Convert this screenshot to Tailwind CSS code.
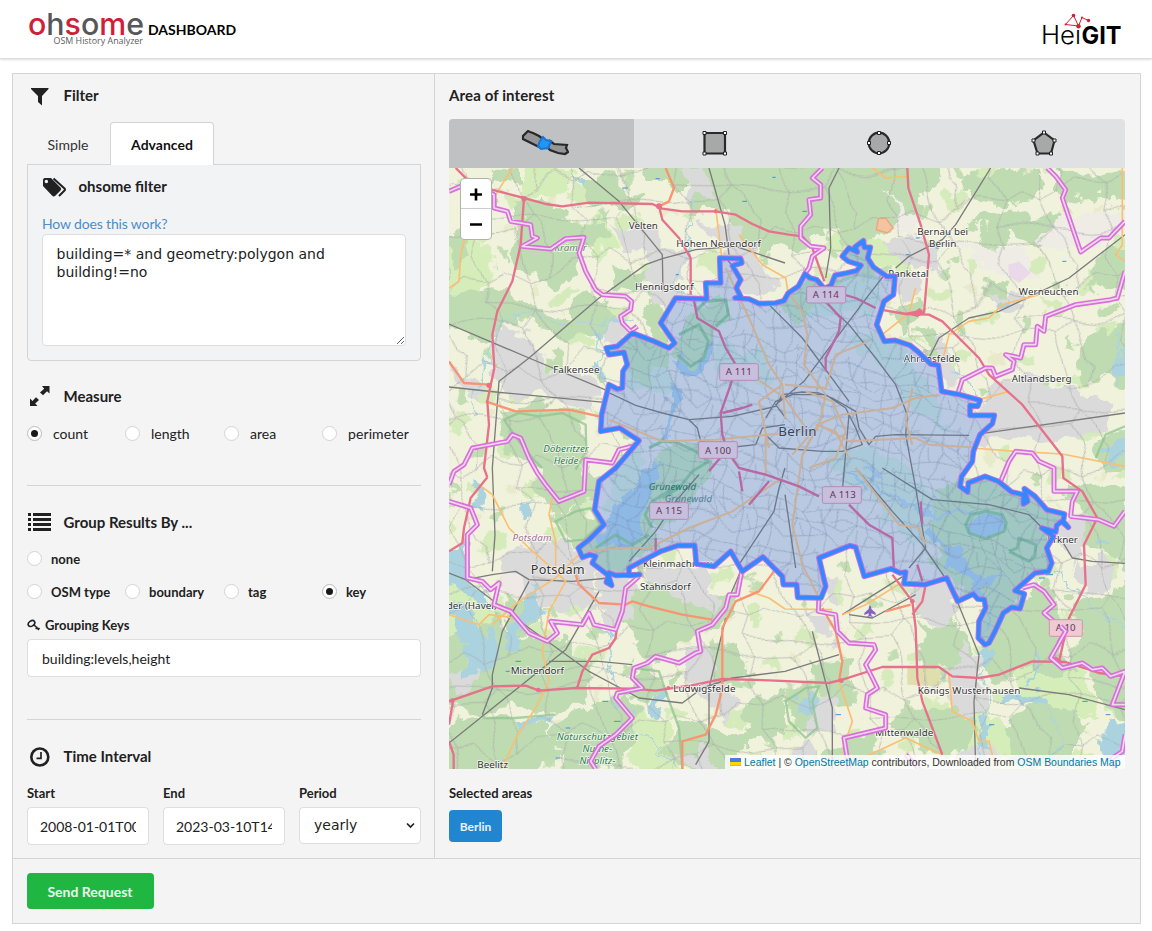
<!DOCTYPE html>
<html lang="en">
<head>
<meta charset="utf-8">
<title>ohsome dashboard</title>
<script src="https://cdn.jsdelivr.net/npm/@tailwindcss/browser@4"></script>
</head>
<body class="w-[1152px] h-[931px] overflow-hidden bg-white font-['Lato',sans-serif] text-sm text-[#212121]">
<header class="h-[59px] flex justify-between border-b border-[#dcdddd] shadow-[0_1px_2px_rgba(34,36,38,0.15)] pl-7 pr-[29px]">
  <div class="flex">
    <svg class="w-[117px] h-[58px]" viewBox="28 0 117 58" aria-label="ohsome OSM History Analyzer">
      <text x="28" y="35" font-family="Inter" font-size="30.500" font-weight="500" textLength="116" lengthAdjust="spacingAndGlyphs" fill="#555758"><tspan fill="#cf2037">o</tspan>h<tspan fill="#cf2037">s</tspan>o<tspan fill="#cf2037">m</tspan>e</text>
      <text x="53.500" y="43.500" font-size="9.500" font-family="Open Sans" font-weight="400" textLength="89.500" lengthAdjust="spacingAndGlyphs" fill="#5c5c5c">OSM History Analyzer</text>
    </svg>
    <span class="mt-5 ml-[3px] text-sm leading-5 font-bold text-black">DASHBOARD</span>
  </div>
  <svg class="w-[82px] h-[58px]" viewBox="1041 0 82 58" fill="#000" font-family="Inter">
    <text x="1041" y="44" font-size="25.500" font-weight="300" textLength="40" lengthAdjust="spacingAndGlyphs">Heı</text>
    <text x="1081.500" y="44" font-size="24.500" font-weight="700" textLength="40" lengthAdjust="spacingAndGlyphs">GIT</text>
    <path d="M1065.500 24.500 1073.500 15.500 1078.500 26 1065.500 24.500M1078.500 26 1082 17.500 1088.500 20.500" fill="none" stroke="#cf2037"/>
    <g fill="#cf2037"><circle cx="1073.500" cy="15.500" r="1.800"/><circle cx="1078.500" cy="26.300" r="2.200"/><circle cx="1088.500" cy="20.500" r="1.700"/><circle cx="1082" cy="17.500" r="1"/><circle cx="1065.500" cy="24.500" r="1"/></g>
  </svg>
</header>

<main class="mt-[14px] ml-3 w-[1129px] h-[851px] border border-[#d4d4d5] bg-[#f4f4f4]">
 <div class="flex h-[785px] border-b border-[#d4d4d5]">
  <section class="w-[422px] h-[784px] border-r border-[#d4d4d5] pl-[14px] pr-[13px]">
    <h2 class="flex items-center h-12 pb-1 text-[15px] font-bold"><svg class="w-[25px] h-6 mr-[11.500px]" viewBox="0 0 25 24"><path d="M4 4H21.500V5L15 12V21.500L11 18V12L4 5Z" fill="#212121"/></svg>Filter</h2>
    <div class="flex h-[43px] relative z-10 -mb-px">
      <span class="w-[83px] pr-px text-center leading-[46px] text-[#333]">Simple</span>
      <span class="w-[104px] rounded-t border border-b-0 border-[#d4d4d5] bg-white text-center leading-[44px] font-bold text-black/95">Advanced</span>
    </div>
    <div class="h-[197px] rounded-b border border-[#d4d4d5] bg-[#f2f3f5] px-[14px]">
      <h3 class="flex items-center h-[43px] text-[15px] font-bold"><svg class="w-[25px] h-6 mr-[11.500px]" viewBox="0 0 25 24"><path fill-rule="evenodd" d="M1 5Q1 3 3 3H9L18.500 12.500Q20 14 18.500 15.500L13 21Q11.500 22 10 20.500L1 11ZM4.300 4.700A1.700 1.700 0 1 0 4.400 8.200 1.700 1.700 0 0 0 4.300 4.700Z" fill="#212121"/><path d="M11.500 3.500 22.500 13.500Q23.500 14.500 22.500 15.500L17 21" fill="none" stroke="#212121" stroke-width="2"/></svg>ohsome filter</h3>
      <a class="block mt-[7px] h-[19px] leading-[18px] tracking-[-0.15px] text-[#4a8ecb]">How does this work?</a>
      <textarea class="block w-[364px] h-[112px] resize rounded border border-[#dededf] bg-white px-[13.500px] pt-[10px] font-['DejaVu_Sans',sans-serif] text-sm leading-[18px]">building=* and geometry:polygon and building!=no</textarea>
    </div>
    <h2 class="flex items-center mt-[23px] h-6 text-[15px] font-bold"><svg class="w-[25px] h-6 mr-[11.500px]" viewBox="0 0 25 24"><path d="M15 2H22.500V9.500L20 7.300 16 11.200 13 8.500 17.200 4.700ZM3 14.500 5.500 17 9 13.300 12 16 8.200 19.500 10.500 22H3Z" fill="#212121"/></svg><span class="pt-[2px]">Measure</span></h2>
    <div class="flex mt-[15px] h-5 items-center whitespace-nowrap">
      <label class="w-[98px] flex items-center gap-[11px]"><i class="size-[15px] shrink-0 rounded-full border border-[#bbb] bg-white flex items-center justify-center"><b class="size-[7px] rounded-full bg-black/90"></b></i><span class="pt-px">count</span></label>
      <label class="w-[99px] flex items-center gap-[11px]"><i class="size-[15px] shrink-0 rounded-full border border-[#d4d4d5] bg-white"></i><span class="pt-px">length</span></label>
      <label class="w-[98px] flex items-center gap-[11px]"><i class="size-[15px] shrink-0 rounded-full border border-[#d4d4d5] bg-white"></i><span class="pt-px">area</span></label>
      <label class="flex items-center gap-[11px]"><i class="size-[15px] shrink-0 rounded-full border border-[#d4d4d5] bg-white"></i><span class="pt-px tracking-[0.1px]">perimeter</span></label>
    </div>
    <hr class="mt-[42px] border-[#d4d4d5]">
    <h2 class="flex items-center mt-6 h-6 text-[15px] font-bold"><svg class="w-[25px] h-6 mr-[11.500px]" viewBox="0 0 25 24"><path d="M1 3H4V6H1ZM6 3H24V6H6ZM1 8H4V11H1ZM6 8H24V11H6ZM1 13H4V16H1ZM6 13H24V16H6ZM1 18H4V21H1ZM6 18H24V21H6Z" fill="#212121"/></svg><span class="pt-[2px]">Group Results By ...</span></h2>
    <div class="flex mt-[14px] h-5 items-center text-[13px] font-bold"><label class="flex items-center gap-[9px]"><i class="size-[15px] rounded-full border border-[#d4d4d5] bg-white"></i><span class="pt-[2px]">none</span></label></div>
    <div class="flex mt-[13px] h-5 items-center whitespace-nowrap text-[13px] font-bold">
      <label class="w-[98px] flex items-center gap-[9px]"><i class="size-[15px] shrink-0 rounded-full border border-[#d4d4d5] bg-white"></i><span class="pt-[2px]">OSM type</span></label>
      <label class="w-[99px] flex items-center gap-[9px]"><i class="size-[15px] shrink-0 rounded-full border border-[#d4d4d5] bg-white"></i><span class="pt-[2px]">boundary</span></label>
      <label class="w-[98px] flex items-center gap-[9px]"><i class="size-[15px] shrink-0 rounded-full border border-[#d4d4d5] bg-white"></i><span class="pt-[2px]">tag</span></label>
      <label class="flex items-center gap-[9px]"><i class="size-[15px] shrink-0 rounded-full border border-[#bbb] bg-white flex items-center justify-center"><b class="size-[7px] rounded-full bg-black/90"></b></i><span class="pt-[2px]">key</span></label>
    </div>
    <div class="flex items-center mt-[14px] h-5 text-[13px] font-bold"><svg class="w-[14px] h-4 mr-1" viewBox="0 0 14 16" fill="none" stroke="#212121" stroke-width="1.600"><ellipse cx="4.500" cy="6.500" rx="3.600" ry="2.500" transform="rotate(-35 4.500 6.500)"/><path d="M6.500 7.500 12 12.500M8.800 12 10.300 10.200M10.800 13 12.500 11"/></svg>Grouping Keys</div>
    <div class="mt-1 h-[38px] rounded border border-[#dededf] bg-white px-[14px] leading-[38px]">building:levels,height</div>
    <hr class="mt-[42px] border-[#d4d4d5]">
    <h2 class="flex items-center mt-[25px] h-6 text-[15px] font-bold"><svg class="w-[25px] h-6 mr-[11.500px]" viewBox="0 0 25 24" fill="none" stroke="#212121"><circle cx="12.800" cy="12" r="8.500" stroke-width="2.600"/><path d="M14 7V13.300H9.500" stroke-width="1.700"/></svg>Time Interval</h2>
    <div class="mt-[14px] grid grid-cols-3 gap-[14px] text-[13px] font-bold leading-5">
      <div>Start<div class="mt-1 h-[38px] rounded border border-[#dededf] bg-white px-3 text-sm leading-[38px] font-normal"><span class="block overflow-hidden whitespace-nowrap">2008-01-01T00:00:00Z</span></div></div>
      <div>End<div class="mt-1 h-[38px] rounded border border-[#dededf] bg-white px-3 text-sm leading-[38px] font-normal"><span class="block overflow-hidden whitespace-nowrap">2023-03-10T14:00:00Z</span></div></div>
      <div>Period<div class="mt-1 h-[37px] rounded border border-[#dededf] bg-white pl-[14px] pr-[5px] text-sm leading-[34px] font-normal font-['DejaVu_Sans',sans-serif] flex items-center justify-between"><span class="pb-[2px]">yearly</span><svg class="w-[9px] h-[7px]" viewBox="0 0 9 7"><path d="M1 1.500 4.500 5 8 1.500" fill="none" stroke="#222" stroke-width="1.700"/></svg></div></div>
    </div>
  </section>

  <section class="w-[705px] pl-[14px]">
    <h2 class="h-[45px] leading-[43px] text-[15px] tracking-[0.12px] font-bold">Area of interest</h2>
    <div class="flex w-[676px] h-[49px] rounded-t overflow-hidden bg-[#e0e1e2]">
      <div class="w-[185px] shrink-0 flex items-center justify-center pb-[2px] bg-[#c0c1c2]"><svg class="w-[48px] h-[26px] mr-[-6px]" viewBox="0 0 48 26"><path d="M7 1 9 2 12 3 18 6 26 12 25 18 18 17 12 14 2 9 2 6Z" fill="#959595" stroke="#282828" stroke-width="2.200"/><path d="M29 11 33 14 46 15 45 18 47 22 44 24 37 23 29 20 27 18Z" fill="#959595" stroke="#282828" stroke-width="2.200"/><path d="M22 7 25 10 30 11 29 14 27 18 20 19 17 16 19 11Z" fill="#2196f3" stroke="#1976d2" stroke-width="2"/></svg></div>
      <div class="w-[163px] shrink-0 flex items-center justify-center pb-[2px] pr-px"><svg class="w-7 h-7" viewBox="0 0 28 28"><path d="M3.500 4H24V24.500H3.500Z" fill="#a7a9a8" stroke="#282a2b" stroke-width="2.200"/><g fill="#fff" stroke="#222"><path d="M2 2.500H5V5.500H2ZM22.500 2.500H25.500V5.500H22.500ZM2 23H5V26H2ZM22.500 23H25.500V26H22.500Z"/></g></svg></div>
      <div class="w-[164px] shrink-0 flex items-center justify-center pb-[2px]"><svg class="w-7 h-7" viewBox="0 0 28 28"><circle cx="14" cy="14" r="10.300" fill="#a7a9a8" stroke="#282a2b" stroke-width="2.200"/><path d="M12.500 2.500H15.500V5.500H12.500ZM22.500 12.500H25.500V15.500H22.500ZM12.500 22.500H15.500V25.500H12.500ZM2.500 12.500H5.500V15.500H2.500Z" fill="#fff" stroke="#222"/></svg></div>
      <div class="w-[164px] shrink-0 flex items-center justify-center pb-[2px] pl-[2px]"><svg class="w-7 h-7" viewBox="0 0 28 28"><path d="M14 3.500 24.500 11.500 21 24.500H7.500L3.500 11.500Z" fill="#a7a9a8" stroke="#282a2b" stroke-width="2.200"/><path d="M12.500 2H15.500V5H12.500ZM23 10H26V13H23ZM19.500 23H22.500V26H19.500ZM6 23H9V26H6ZM2 10H5V13H2Z" fill="#fff" stroke="#222"/></svg></div>
    </div>
    <div class="relative w-[676px] h-[601px] overflow-hidden">
      <svg class="block w-[676px] h-[601px]" viewBox="0 0 2028 1803" font-family="Noto Sans">
        <defs>
          <filter id="organic" filterUnits="userSpaceOnUse" x="-60" y="-60" width="2150" height="1920" color-interpolation-filters="sRGB"><feTurbulence type="fractalNoise" baseFrequency=".014" numOctaves="4" seed="7"/><feDisplacementMap in="SourceGraphic" scale="95" xChannelSelector="R" yChannelSelector="G"/></filter>
          <filter id="winding" filterUnits="userSpaceOnUse" x="-60" y="-60" width="2150" height="1920" color-interpolation-filters="sRGB"><feTurbulence type="fractalNoise" baseFrequency=".006" numOctaves="1" seed="3"/><feDisplacementMap in="SourceGraphic" scale="110" xChannelSelector="R" yChannelSelector="G"/></filter>
          <pattern id="streets" width="173" height="149" patternUnits="userSpaceOnUse" patternTransform="rotate(12)"><path d="M0 20 55 32 100 12 173 20M20 0 38 60 25 100 20 149M70 0 55 32 80 80 70 149M125 0 110 60 130 100 125 149M0 90 38 60 110 60 173 90M0 130 60 115 130 100 173 130M80 80 130 100M100 12 110 60M0 55 38 60M140 17 150 80M45 75 55 117M95 0 90 16M130 60 173 50" fill="none" stroke="#7286a8" stroke-opacity=".5" stroke-width="2.500"/></pattern>
          <pattern id="lanes" width="311" height="277" patternUnits="userSpaceOnUse" patternTransform="rotate(-9)"><path d="M0 55 70 78 120 60 190 110 250 95 311 55M45 0 70 78 40 150 75 210 45 277M190 110 210 180 160 220 180 277M180 0 190 110M40 150 120 165 210 180 311 205M0 205 75 210 160 220M250 95 265 30 245 0M245 277 230 210 210 180" fill="none" stroke="#a9a9ac" stroke-opacity=".8" stroke-width="2.500"/></pattern>
          <pattern id="fields" width="347" height="293" patternUnits="userSpaceOnUse" patternTransform="rotate(8)"><path d="M20 25 65 10 80 40 50 60 20 50ZM180 60 235 50 245 75 210 100 185 90ZM90 160 130 145 160 170 130 195 95 185ZM260 200 310 190 325 225 285 245 255 230Z" fill="#d6ebbb"/><path d="M110 80 140 70 150 100 125 110ZM270 130 300 115 310 145 285 155ZM20 220 50 205 65 240 35 255ZM175 230 205 225 210 260 185 265Z" fill="#c3ddb3"/><path d="M300 30H335V55H305ZM190 130 225 125 220 155 195 150Z" fill="#e9eacb"/></pattern>
          <path id="berlin" d="M812 270 875 272 878 285 850 293 875 335 862 360 875 385 858 390 900 393 930 407 980 405 1005 398 1018 375 1048 355 1068 318 1083 330 1103 335 1126 362 1146 352 1158 322 1193 315 1223 308 1236 292 1198 280 1180 265 1200 240 1225 252 1218 237 1243 218 1246 238 1264 238 1256 270 1273 297 1313 325 1338 325 1333 380 1305 400 1283 470 1306 520 1338 517 1383 532 1408 552 1445 588 1468 592 1478 670 1533 680 1593 697 1586 715 1563 712 1563 742 1636 742 1630 767 1593 800 1573 850 1570 880 1538 925 1533 955 1556 972 1558 945 1608 925 1648 940 1688 972 1723 980 1723 1008 1736 1000 1726 962 1758 985 1793 1025 1846 1038 1843 1060 1858 1078 1838 1060 1823 1072 1820 1092 1778 1080 1813 1105 1793 1140 1808 1185 1798 1210 1758 1215 1698 1268 1726 1278 1713 1322 1688 1318 1663 1335 1638 1390 1620 1425 1608 1430 1588 1410 1590 1360 1610 1320 1606 1295 1586 1293 1573 1278 1526 1300 1493 1230 1428 1250 1365 1247 1370 1212 1353 1215 1326 1202 1246 1225 1220 1138 1203 1133 1110 1170 1130 1255 1116 1290 1046 1288 1043 1250 1003 1250 1000 1225 942 1167 880 1210 845 1150 795 1195 742 1188 737 1132 685 1133 635 1150 540 1200 540 1222 572 1220 500 1222 480 1215 472 1243 488 1252 478 1222 465 1212 430 1185 440 1165 422 1160 400 1168 388 1140 420 1115 465 1070 437 1025 450 940 500 900 570 818 512 780 455 790 458 740 480 650 505 663 520 660 522 610 535 590 525 553 480 560 472 540 505 535 550 495 610 518 660 540 677 525 635 465 680 390 773 393 770 345 815 345Z"/>
          <path id="border" d="M0 70 35 55 50 40 135 80 135 120 175 130 185 160 245 170 250 205 265 210 220 235 305 243 350 212 405 208 390 255 410 310 440 365 460 380 530 385 548 400 545 425 515 445 520 465 545 490 565 475M1120 0 1090 30 1115 50 1115 90 1080 95 1085 140 1055 175 1055 210 1085 235 1125 240 1090 265 1080 300 1065 320M1795 0 1820 25 1850 65 1840 90 1895 252 1955 210 1980 210 2028 160M2028 310 2005 390 1985 395 1880 410 1790 445 1785 490 1765 475 1760 530 1725 530 1715 570 1670 560 1695 580 1690 605 1640 625 1630 600 1610 600 1540 635 1525 680M570 830 510 845 490 885 410 875 405 970 330 1000 290 950 265 915 240 870 215 810 190 800 175 820 70 840 45 890 15 910 0 950M0 1000 65 1020 85 1070 55 1100 55 1230 100 1240 125 1265 150 1245 135 1310 185 1330 240 1395 295 1420 325 1395 305 1360 400 1370 420 1335 435 1370 500 1385 520 1330 530 1260 570 1225M880 1200 865 1280 840 1280 830 1320 790 1370 745 1390 755 1450 740 1455 690 1485 620 1465 595 1485 555 1500 550 1530 580 1560 505 1575 500 1590 550 1650 500 1700 450 1735 425 1780 440 1803M1110 1285 1108 1330 1160 1340 1165 1390 1200 1425 1275 1430 1280 1445 1250 1490 1285 1560 1255 1580 1250 1620 1310 1640 1310 1680 1185 1710 1200 1803M1655 940 1680 880 1700 850 1750 855 1770 880 1815 900 1815 970 1885 970 1870 1000 1865 1045 1950 1055 1995 1075 2028 1030M1720 1260 1755 1250 1785 1270 1815 1310 1785 1335 1850 1390 1805 1470 1840 1500 1900 1485 1930 1505 1960 1500 1985 1525 2028 1510 1990 1610 2028 1610M1370 1760 1390 1780 1410 1803M2028 1700 2020 1750 1990 1770 2000 1803"/>
        </defs>
        <rect width="2028" height="1803" fill="#f1f2dc"/>
        <g filter="url(#organic)">
        <rect x="-60" y="-60" width="2150" height="1920" fill="url(#fields)"/>
        <g fill="#d5edb9">
          <path d="M-50 190 90 210 140 300 100 390 -50 430ZM250 -50 370 20 350 70 210 100ZM150 560 250 610 270 680 180 700ZM380 140 470 160 520 230 430 270ZM600 440 700 500 620 540ZM1660 1400 1900 1500 1950 1650 1720 1600ZM1580 1600 1700 1700 1650 1850 1530 1850ZM520 1600 650 1660 700 1850 560 1850ZM-50 1200 150 1300 190 1450 -50 1500ZM1100 230 1220 180 1370 250 1400 350 1300 300Z"/>
        </g>
        <g fill="#bedbb1">
          <path d="M575 -50H1440L1460 45 1400 95 1410 165 1280 195 1200 250 1110 190 1050 240 985 230 940 260 880 230 840 135 720 135 740 60 620 60Z"/>
          <path d="M205 100 300 95 345 140 460 165 490 210 410 245 385 340 270 350 200 320 180 250 210 200ZM135 15 205 0 230 45 150 60ZM-50 350 90 390 180 360 260 430 350 440 410 380 470 400 520 470 360 530 210 450 120 520 -50 480ZM355 50 500 20 580 95 500 130 430 110ZM480 310 620 300 600 350 500 370ZM-50 210 35 180 75 265 30 295ZM150 740 290 710 400 750 420 860 380 930 410 1010 310 1030 270 920 180 870ZM590 400 640 380 650 520 600 540Z"/>
          <path d="M1550 10 1750 0 1780 70 1700 115 1530 70ZM1830 20 2078 20V110L1960 80 1850 90ZM1570 150 1680 120 1820 150 1800 230 1640 200ZM1980 240 2078 210V380L1900 350ZM1910 500 2078 470V650L1870 640ZM1410 470 1460 460 1480 540 1420 580ZM1340 420 1390 390 1420 430 1370 500ZM1620 330 1700 340 1680 410 1590 390ZM1930 860 1980 790 2078 770V900H1940ZM1600 180 1670 210 1630 250 1580 230Z"/>
          <path d="M310 1050 400 1010 450 1080 400 1140 360 1130ZM530 1260 650 1210 730 1240 710 1340 760 1390 610 1480 510 1380ZM700 1300 870 1270 800 1390 720 1390ZM-50 1430 150 1340 220 1420 330 1400 430 1480 400 1590 310 1640 170 1610 80 1640 -50 1590ZM160 1260 270 1350 230 1410 160 1340ZM-50 1690 110 1640 280 1670 330 1720 230 1850H20ZM310 1680 430 1590 560 1570 570 1690 510 1790 340 1850ZM680 1690 740 1660 860 1690 930 1660 900 1750 760 1850 650 1760ZM870 1610 1008 1560V1700L890 1690ZM310 970 350 920 440 900 430 1000 350 1010ZM740 1440 870 1420 920 1520 810 1570ZM550 1520 620 1500 660 1570 570 1600Z"/>
          <path d="M1610 1430 1660 1330 1720 1310 1780 1240 1830 1340 1840 1430 1880 1520 1720 1500 1640 1540 1590 1500ZM1850 950 1960 940 2078 1000V1220L1960 1160 1900 1120ZM1900 1300 2078 1230V1560L1860 1500ZM1680 1660 1780 1600 1870 1620 1920 1710 1860 1800 1680 1790ZM1410 1380 1500 1340 1560 1440 1530 1500 1420 1520ZM1100 1460 1190 1490 1220 1630 1120 1600ZM1010 1590 1100 1540 1100 1660 1040 1700ZM1300 1650 1470 1600 1570 1620 1510 1750 1370 1720ZM1140 1740 1220 1690 1300 1720 1240 1850H1090ZM1470 1680 1580 1650 1550 1750 1480 1770ZM1940 1500 2078 1490V1680L1950 1620Z"/>
        </g>
        <g fill="#dadada">
          <path d="M135 470 230 510 300 590 400 600 450 650 420 730 300 690 180 680 130 620ZM620 230 700 250 720 340 650 370 610 290ZM690 0 770 0 800 100 730 95ZM760 150 870 175 930 280 1010 330 970 390 880 370 800 240ZM490 160 620 180 630 250 560 270ZM590 290 700 350 690 390 610 410ZM0 580 80 640 110 700 20 660ZM530 440 560 490 490 530 430 500ZM1310 220 1420 200 1440 240 1490 290 1410 300 1330 270ZM1320 330 1400 320 1420 370 1350 400ZM1440 520 1490 500 1510 580 1540 650 1490 660ZM1630 640 1700 630 1850 660 1990 700 1980 780 1800 830 1660 800 1590 850 1580 770ZM1610 380 1720 380 1750 410 1670 430Z"/>
          <path d="M150 1180 250 1110 380 1140 440 1220 430 1320 300 1300 230 1290 160 1240ZM450 1190 560 1240 550 1370 490 1390 440 1300ZM590 1200 720 1190 800 1230 790 1330 690 1300ZM690 1470 760 1430 840 1550 850 1650 740 1600ZM1080 1300 1170 1370 1150 1430 1090 1390ZM1130 1230 1180 1240 1160 1300 1120 1280ZM1370 1250 1500 1250 1540 1330 1480 1370 1420 1350ZM1530 1430 1590 1480 1600 1650 1520 1640 1490 1570ZM1800 1100 1870 1030 1910 1100 1870 1200ZM1880 1180 1970 1170 1990 1250 1910 1280ZM0 1520 60 1480 110 1500 70 1560 20 1580ZM1100 1580 1160 1580 1150 1690 1080 1690ZM1000 1770 1080 1710 1100 1760 1060 1803ZM1540 1750 1630 1730 1640 1790 1540 1803ZM690 1750 770 1740 790 1803H710Z"/>
        </g>
        <g fill="#efece6"><path d="M1760 200 1850 130 2000 130 2028 160 1960 230 1880 260 1800 250ZM1310 70 1400 150 1420 220 1360 190ZM1520 230 1750 260 1770 330 1620 300Z"/></g>
        <g fill="#aad3df">
          <path d="M-50 1160 35 1150 55 1240 110 1260 120 1340 70 1290 -50 1240ZM10 1320 70 1340 90 1430 130 1360 150 1440 110 1510 40 1520 60 1440ZM220 995 265 995 262 1050 220 1050ZM220 1310 270 1250 280 1320 230 1390 200 1450 170 1430ZM80 930 110 960 100 1020 75 1000ZM370 40 395 45 390 70 370 65ZM440 575 470 580 485 630 465 620ZM1645 395 1690 390 1675 410 1645 410ZM2000 560 2078 510V630H2005ZM1970 840 2078 800V850L1960 880ZM1040 1590 1090 1570 1100 1630 1050 1650ZM590 1610 650 1560 660 1610 610 1640ZM1950 1710 2000 1660 2078 1700V1740L1970 1760ZM1580 1450 1620 1430 1610 1520 1590 1510ZM1650 1590 1800 1580 1810 1610 1650 1610ZM1750 1490 1770 1480 1740 1560ZM200 1655 300 1645 305 1665 210 1675ZM1590 1640 1620 1650 1620 1740 1590 1740ZM1950 1120 1990 1130 1960 1150Z"/>
        </g>
        <g fill="none" stroke="#acd4e0" stroke-width="5">
          <path d="M60 770 80 680 150 480 200 445 270 455 380 465 470 460M745 90 740 170 700 260 690 370M460 1380 480 1470 500 1560 580 1690 680 1803M1600 1430 1610 1550 1590 1800M1510 610 1570 660 1580 700M2000 500 2010 640M1810 1220 1880 1250 1930 1320 2028 1370M1800 1590 1830 1700 1800 1770M550 440 430 490 470 600"/>
        </g>
        </g>
        <path d="M160 1210 220 1220 230 1290 160 1270Z" fill="#efe9e6"/><path d="M1375 1495 1475 1505 1470 1555 1375 1550Z" fill="#dfdfad"/><path d="M1678 290 1710 280 1745 315 1710 345 1680 325Z" fill="#ead9e8"/><path d="M1288 152 1310 150 1332 180 1315 195 1282 185Z" fill="#f3c49f" stroke="#f1a37c" stroke-width="4"/>
        <rect x="-60" y="-60" width="2150" height="1920" fill="url(#lanes)" filter="url(#winding)"/>
        <g fill="none" stroke="#8fc490" stroke-opacity=".75" stroke-width="7"><path d="M165 755 210 735 270 745 340 735 410 770 412 850 380 905M165 755 210 820 250 870 280 900M320 1060 380 1030 425 1020 452 1070 405 1115 350 1120ZM1010 1600 1070 1560 1110 1555 1090 1600 1105 1680 1070 1710 1020 1660ZM550 1500 630 1510 650 1570 690 1680 700 1803M100 1650 200 1650 320 1640M1940 870 1970 800 2028 775"/></g>
        <g stroke="#3b93dc" stroke-width="3"><path d="M620 32h12M520 60h16M680 320h10M970 28h10M880 100h14M1060 130h14M1400 210h12M1370 260h12M1460 240h10M1840 280h12M460 1600h18M495 1660h20M350 1680h14M200 1480h16M170 1510h12M320 1770h14M1770 1190h16M1790 1220h22M1770 1230h18M1620 1670h16M1900 1600h16M1970 1640h14M1160 1640h16"/></g>
        <g fill="none" stroke="#7b7b7b" stroke-width="4" stroke-linejoin="round">
          <path d="M390 0 510 100 640 260 642 370M780 0 828 170 840 260M0 468 240 570 480 670 560 710M1008 285 860 235 740 245 640 272 590 290 450 390 240 570 150 640 130 900 138 1100 130 1210M0 657 140 672 560 712M1625 0 1520 170 1480 215 1380 265 1340 300M1140 60 1170 0M1140 60 1145 240 1130 330M2028 200 1860 330 1650 430 1560 450 1470 510 1430 590 1400 640 1375 700M2028 735 1750 775 1560 802"/>
          <path d="M0 1215 50 1235 130 1220 200 1210 240 1235 370 1240 480 1230 540 1180M50 1235 240 1380 420 1510 570 1590 700 1605 760 1560 850 1530 1008 1510 1170 1460M0 1725 350 1445 450 1270M100 1640 130 1560 130 1520 160 1390 240 1240M300 1480 450 1480 550 1490M830 1350 780 1560 780 1720 740 1790M840 1290 875 1210M1090 1390 1150 1620 1150 1803M1370 1220 1180 1340M1200 1340 1270 1350 1400 1280M1500 1240 1590 1460 1575 1600 1580 1803M1840 1120 1870 1170 1930 1180 2028 1186M1710 1560 1860 1580 2028 1625"/>
        </g>
        <g fill="none" stroke="#fabf72" stroke-width="5" stroke-linejoin="round"><path d="M0 360 30 340 35 260 55 180 100 150M140 80 190 0M800 120 810 200 822 300M870 200 940 290 1010 330 1020 390M1270 0 1310 30 1380 25M1300 500 1380 435 1400 360M1480 580 1500 500 1560 460 1620 450 1660 410 1770 380M1590 695 1680 670M1570 840 1700 850 1840 858 2028 895M2020 0 2020 230 2000 260 2028 280M310 990 300 1040 320 1120 320 1210 350 1240 300 1330 280 1450 300 1540 260 1620 200 1710 160 1803M90 950 130 980 180 1080 240 1140 320 1210M130 1370 210 1300 320 1230 400 1150M0 1340 90 1370 120 1340 200 1350M900 1270 960 1290 1008 1323 1150 1325M1180 1340 1250 1310 1380 1230M1170 1540 1210 1660 1190 1720 1180 1803M1500 1520 1510 1630 1570 1660 1590 1720 1620 1720 1640 1803M1220 1780 1370 1710 1480 1760"/></g>
        <g fill="none" stroke="#f99472" stroke-width="7" stroke-linejoin="round"><path d="M650 0 675 60 660 100 630 115M0 580 45 645 120 650M110 700 200 730 360 725 450 745M380 1220 390 1250 450 1305 530 1310 550 1300 600 1315 700 1340 790 1355M1020 1050 990 1190 930 1270 860 1300 820 1380 820 1560 800 1640 770 1700 700 1720 700 1803M1120 1320 1160 1390 1180 1480 1170 1540M1310 1330 1385 1310"/></g>
        <g fill="none" stroke="#e7718b" stroke-width="7" stroke-linejoin="round">
          <path d="M20 0 55 35M128 65 225 90 290 108 340 115 420 104 610 108 640 122 700 130 800 130 860 140 910 168 960 190 1020 200 1060 205 1090 240 1126 340M225 90 215 230 190 340 145 430 130 500 136 600 115 700 120 770 105 900 115 928M630 115 640 155 690 210 725 270 725 380M1375 0 1378 60 1415 170 1440 260 1425 435M1295 425 1370 438 1440 440 1480 460 1590 570 1620 620 1720 710 1840 865 1843 930 1900 970 1945 1050 1905 1130 1910 1250 1860 1350 1830 1480M115 928 65 990 45 1080 40 1125 0 1150M0 1600 130 1555 230 1553 270 1568 380 1560 550 1562 620 1568 740 1550 820 1533 960 1537 1140 1545 1180 1535 1300 1497 1470 1497 1510 1525 1590 1530 1650 1520 1750 1480 1850 1482 1950 1515 2028 1525M385 1558 400 1510 430 1460 480 1440 500 1410 505 1370M12 1600 0 1670M0 1720 14 1760 14 1803M1330 1220 1390 1300 1400 1380 1405 1530 1420 1600 1480 1760M1405 1200 1430 1250 1420 1300 1390 1340"/>
        </g>
        <g fill="#e7718b"><circle cx="225" cy="92" r="8"/><circle cx="630" cy="115" r="9"/><circle cx="800" cy="130" r="6"/><path d="M1365 435 1400 428 1412 420 1428 436 1405 447Z"/><path d="M1800 1480 1820 1465 1840 1480Z"/><circle cx="1177" cy="1538" r="7"/><circle cx="10" cy="1598" r="7"/><circle cx="268" cy="1566" r="7"/><circle cx="658" cy="1560" r="6"/><circle cx="1390" cy="1300" r="7"/><circle cx="120" cy="652" r="8"/></g>
        <g id="places" font-size="29.500" fill="#333" stroke="#fff" stroke-opacity=".75" stroke-width="5" paint-order="stroke" text-anchor="middle">
          <text x="583" y="184">Velten</text><text x="809" y="238" textLength="254">Hohen Neuendorf</text><text x="646" y="367" textLength="176">Hennigsdorf</text><text x="382" y="616" textLength="139">Falkensee</text><text x="1481" y="200" textLength="153">Bernau bei</text><text x="1481" y="237">Berlin</text><text x="1378" y="328" textLength="121">Panketal</text><text x="1799" y="381" textLength="179">Werneuchen</text><text x="1449" y="581" textLength="169">Ahrensfelde</text><text x="1778" y="641" textLength="180">Altlandsberg</text><text x="326" y="1218" font-size="38" textLength="161">Potsdam</text><text x="649" y="1266">Stahnsdorf</text><text x="685" y="1196" textLength="206">Kleinmachnow</text><text x="68" y="1323">der (Havel)</text><text x="265" y="1518">Michendorf</text><text x="766" y="1571" textLength="187">Ludwigsfelde</text><text x="131" y="1800">Beelitz</text><text x="1560" y="1579" textLength="308">Königs Wusterhausen</text><text x="1366" y="1705" textLength="174">Mittenwalde</text><text x="1841" y="1125">Erkner</text>
          <g font-style="italic" fill="#29804a"><text x="365" y="250" fill="#65845f">Krämer</text><text x="351" y="851">Döberitzer</text><text x="351" y="888">Heide</text><text x="445" y="1717" textLength="244">Naturschutzgebiet</text><text x="445" y="1752">Nuthe-</text><text x="445" y="1788">Nieplitz-</text><text x="249" y="1119" fill="#a56e9c" textLength="117">Potsdam</text></g>
        </g>
        <g fill="none" stroke-linejoin="round"><use href="#border" stroke="#da6edb" stroke-width="15"/><use href="#border" stroke="#f0d8ee" stroke-width="5"/></g>
        <clipPath id="inside"><use href="#berlin"/></clipPath>
        <use href="#berlin" fill="#b9c9e1"/>
        <g clip-path="url(#inside)">
          <g filter="url(#organic)">
          <g fill="#a5c9d5" fill-opacity=".75"><path d="M520 560 660 550 680 680 520 660ZM1000 400 1280 280 1310 420 1200 430 1080 480ZM1200 500 1290 480 1440 620 1500 800 1400 740 1310 620ZM480 830 600 850 540 1000 470 1030ZM800 550 970 520 950 650 850 670ZM1120 850 1330 850 1400 970 1240 1010ZM1280 1010 1420 940 1510 1060 1420 1150Z"/></g>
          <g fill="#a1c7c3"><path d="M470 535 550 470 640 530 670 550 660 620 610 610 600 660 520 600ZM730 430 830 390 840 450 800 500 780 560 720 600 680 570 700 490ZM600 900 640 840 760 820 790 900 770 960 700 1030 620 1090 570 1080 600 1000ZM360 1130 470 1070 570 1060 640 1110 620 1160 450 1260ZM988 380 1080 320 1190 320 1150 390 1080 420 1060 480 1020 465ZM1170 260 1260 210 1270 310 1180 330ZM1450 970 1640 880 1900 1060 1830 1210 1720 1290 1620 1460 1550 1430 1530 1300 1450 1150 1440 1040Z"/></g>
          <g fill="#8fb9e5"><path d="M760 535 785 530 790 560 740 610 720 620 680 590 700 600ZM660 660 690 670 670 780 640 830 660 750ZM520 990 600 890 630 850 600 1010 570 1090 460 1150 450 1080ZM1445 1070 1470 1120 1540 1160 1600 1240 1670 1220 1610 1280 1600 1430 1590 1310 1510 1190 1430 1110Z"/></g>
          <path d="M1270 900 1290 950 1380 1010 1440 1030 1560 1040M1200 900 1260 960 1270 1000" fill="none" stroke="#94bce6" stroke-width="12"/>
          </g>
          <path d="M1555 1070 1600 1035 1660 1040 1675 1080 1610 1110 1565 1100Z" fill="#8fb9e5"/>
          <g fill="none" stroke="#79b6a7" stroke-width="9" stroke-linejoin="round"><path d="M740 430 770 400 830 395 838 440 800 475M690 500 750 470 778 520 765 570 725 595 685 560M600 840 640 820 680 822 740 850 780 880 730 910 690 960 640 990M1550 1070 1565 1040 1610 1030 1660 1040 1672 1065 1665 1090 1610 1112 1560 1095ZM1680 1150 1705 1140 1710 1110 1760 1130 1758 1165 1740 1180 1680 1150M610 1080 588 1040 610 1000 690 950M440 1140 500 1100 550 1130 600 1100"/></g>
          <rect width="2028" height="1803" fill="url(#streets)" filter="url(#winding)"/>
          <g fill="none" stroke="#6d788c" stroke-width="4" stroke-linejoin="round"><path d="M450 660 560 712 640 735 720 755 850 745 980 715 1000 680 1060 672 1110 675 1150 690 1220 730 1230 780 1260 830 1280 805 1340 800 1560 802M830 270 900 350 1060 510 1200 700M1126 400 1200 470 1280 570 1340 650 1375 740 1370 800 1400 960 1430 1140 1380 1200M1330 290 1260 380 1065 640 980 710 1010 750M720 755 745 780 755 820 830 840 920 830 940 780 1008 770M1220 900 1330 1030 1420 1130 1530 1290M1300 900 1450 995 1620 1010 1740 1040 1780 1080M1200 740 1180 970M540 1180 620 1090 680 1000 750 920M1008 900 990 960 975 1030 870 1190M1008 980 1040 1200M950 750 980 700 1030 680 1130 680 1190 720 1220 780 1240 830 1180 850 1120 850 990 840 950 800"/></g>
          <g fill="none" stroke="#cbb099" stroke-width="6" stroke-linejoin="round"><path d="M830 300 900 450 960 590 1000 650 1008 750M920 630 1008 690 1070 780M1008 650 1130 660 1160 560 1260 520M1008 360 1060 430 1075 500 1065 590 1130 680 1110 770 1030 860M1105 770 1180 740 1330 720 1400 690 1470 680M1110 770 1200 820 1400 810 1440 830 1570 838M1100 770 1160 790 1200 870M480 755 640 820 800 815 1110 785M1110 770 1060 860 1030 1070 1060 1190 1110 1290M1220 900 1350 1070 1410 1080 1430 1130M410 1150 520 1140 600 1140 720 1080 850 1030 1000 930M1390 660 1370 760 1390 830M950 800 950 920M1070 670 1150 700 1190 790 1160 870 1080 900M1000 650 930 700 960 840"/></g>
          <g fill="none" stroke="#b868a5" stroke-width="7" stroke-linejoin="round"><path d="M730 370 745 450 810 490 830 540 860 590 845 650 815 735 820 800 835 850 870 900 950 920 1050 955 1110 985M910 710 880 720 820 735M830 850 780 910M620 1110 620 1190M1130 300 1150 370 1220 390 1280 420M1130 400 1175 450 1170 490 1130 570 1130 610M870 910 880 970M1200 1010 1260 1070 1330 1110 1335 1210M1415 1000 1420 1070M960 940 900 1010M1405 1190 1420 1240"/></g>
          <use href="#places" opacity=".75"/>
        </g>
        <g fill="none" stroke-linejoin="round"><use href="#berlin" stroke="#bd70e3" stroke-width="17"/><use href="#berlin" stroke="#3388ff" stroke-width="11"/></g>
        <g text-anchor="middle">
          <text x="1045" y="803" font-size="40" textLength="115" fill="#344265" stroke="#c4d2e8" stroke-width="4" paint-order="stroke">Berlin</text>
          <g fill="#c8bfdc" stroke="#b58bbb" stroke-width="3"><rect x="812" y="587" width="116" height="50" rx="5"/><rect x="749" y="821" width="116" height="50" rx="5"/><rect x="602" y="1004" width="116" height="50" rx="5"/><rect x="1073" y="356" width="117" height="49" rx="5"/><rect x="1120" y="956" width="117" height="50" rx="5"/><rect x="1801" y="1355" width="99" height="50" rx="5" fill="#eccbd2" stroke="#dc91a9"/></g>
          <g font-size="29" fill="#633562"><text x="869" y="622" textLength="78">A 111</text><text x="807" y="857" textLength="78">A 100</text><text x="660" y="1039" textLength="78">A 115</text><text x="1130" y="391" textLength="78">A 114</text><text x="1181" y="991" textLength="78">A 113</text><text x="1850" y="1390">A 10</text></g>
          <path d="M1835 1375 1850 1390 1830 1425" fill="none" stroke="#da6edb" stroke-width="15"/><path d="M1835 1375 1850 1390 1830 1425" fill="none" stroke="#f0d8ee" stroke-width="5"/>
          <g font-size="29" font-style="italic" fill="#28736d"><text x="670" y="967" textLength="142">Grunewald</text><text x="718" y="1002" textLength="142" fill="#4f809a">Grunewald</text></g>
        </g>
        <path d="M1263 1312Q1267 1316 1267 1323L1280 1335V1341L1267 1336V1342L1273 1348 1263 1345 1253 1348 1259 1342V1336L1246 1341V1335L1259 1323Q1259 1316 1263 1312Z" fill="#8461c4"/>
      </svg>
      <div class="absolute left-[11px] top-[10px] w-[32px] h-[62px] rounded border border-[#aeb6ac] bg-white text-black">
        <svg class="block" width="30" height="60" viewBox="0 0 30 60"><path d="M9 15.500H21M15 9.500V21.500M9 45.500H21" stroke="#000" stroke-width="2.600"/><path d="M0 29.500H30" stroke="#ccc"/></svg>
      </div>
      <div class="absolute right-0 bottom-0 h-[14px] w-[400px] flex items-center whitespace-nowrap bg-white/80 pl-[5px] font-['Liberation_Sans',sans-serif] text-[11px] leading-[14px] text-[#333]">
        <svg class="w-[11px] h-[8px] mr-[3px]" viewBox="0 0 11 8"><path fill="#4c7be1" d="M0 0h11v4H0z"/><path fill="#ffd500" d="M0 4h11v3H0z"/><path fill="#e0bc00" d="M0 7h11v1H0z"/></svg>
        <svg class="w-[378px] h-[14px]" viewBox="0 0 378 14"><text x="0" y="11" textLength="376.500" lengthAdjust="spacingAndGlyphs"><tspan fill="#0078a8">Leaflet</tspan><tspan fill="#333"> | © </tspan><tspan fill="#0078a8">OpenStreetMap</tspan><tspan fill="#333"> contributors, Downloaded from </tspan><tspan fill="#0078a8">OSM Boundaries Map</tspan></text></svg>
      </div>
    </div>
    <div class="mt-[14px] h-5 text-[13px] leading-5 font-bold">Selected areas</div>
    <button class="block mt-[7px] h-8 w-[53px] rounded bg-[#2185d0] pt-[2px] text-[12px] font-bold text-white/90">Berlin</button>
  </section>
 </div>
 <button class="block mt-[14px] ml-[14px] h-9 w-[127px] rounded bg-[#1fb641] pt-px pr-px text-sm font-bold text-white/90">Send Request</button>
</main>
</body>
</html>
